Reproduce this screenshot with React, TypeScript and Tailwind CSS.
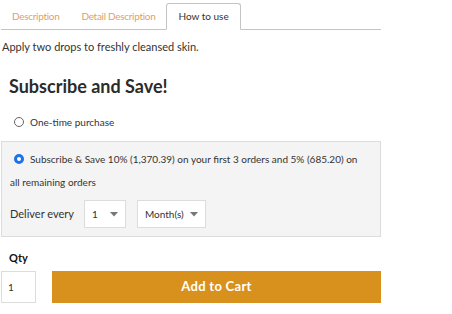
import React from "react";

function Caret() {
  return (
    <svg width="8" height="5" viewBox="0 0 8 5" className="ml-auto">
      <path d="M0 0 H8 L4 4.5 Z" fill="#777" />
    </svg>
  );
}

export default function App() {
  return (
    <div className="w-[452px] h-[314px] bg-white text-[#333] font-['Lato',sans-serif] overflow-hidden">
      <div className="w-[380px] ml-[1px]">
        {/* Tabs */}
        <div className="flex items-end h-[30px] border-b border-[#c4c4c4]">
          <div className="h-[26px] flex items-center pl-[11px] pr-[11px] text-[10px] tracking-[-0.3px] text-[#e0a06c]">Description</div>
          <div className="h-[26px] flex items-center pl-[11px] pr-[11px] text-[10px] tracking-[-0.3px] text-[#e0a06c]">Detail Description</div>
          <div className="h-[27px] mb-[-1px] flex items-center px-[11px] text-[10px] text-[#333] bg-white border border-[#c4c4c4] border-b-white rounded-t-[3px]">How to use</div>
        </div>
        <div className="mt-[10px] ml-[1px] text-[11px] leading-[14px]">Apply two drops to freshly cleansed skin.</div>
        <div className="mt-[21px] ml-[8px] text-[18px] font-bold leading-[22px] text-[#2b2b2b]">Subscribe and Save!</div>
        <label className="mt-[18px] ml-[13px] flex items-center text-[10px] leading-[14px]">
          <span className="w-[10px] h-[10px] rounded-full border border-[#666] bg-white mr-[6px]"></span>
          One-time purchase
        </label>
        <div className="mt-[12px] bg-[#f4f4f4] border border-[#dcdcdc] pt-[6px] pb-[8px]">
          <div className="ml-[8px] text-[10px] leading-[23px] pr-[12px]">
            <span className="inline-block align-middle w-[10px] h-[10px] rounded-full border-[3px] border-[#1a73e8] bg-white ml-[4px] mr-[6px] relative top-[-1px]"></span>
            Subscribe &amp; Save 10% (1,370.39) on your first 3 orders and 5% (685.20) on all remaining orders
          </div>
          <div className="mt-[6px] ml-[8px] flex items-center text-[11px]">
            <span>Deliver every</span>
            <div className="ml-[10px] w-[42px] h-[28px] bg-white border border-[#dcdcdc] flex items-center px-[7px] text-[10px]">
              1<Caret />
            </div>
            <div className="ml-[11px] w-[69px] h-[28px] bg-white border border-[#dcdcdc] flex items-center px-[7px] text-[10px]">
              Month(s)<Caret />
            </div>
          </div>
        </div>
        <div className="mt-[14px] ml-[8px] text-[11px] font-bold text-[#111] leading-[14px]">Qty</div>
        <div className="mt-[6px] flex">
          <div className="w-[35px] h-[32px] border border-[#dcdcdc] flex items-center pl-[6px] text-[10px]">1</div>
          <button className="ml-[16px] flex-1 h-[32px] bg-[#d9911e] text-white text-[13px] font-bold tracking-[0.3px]">Add to Cart</button>
        </div>
      </div>
    </div>
  );
}
